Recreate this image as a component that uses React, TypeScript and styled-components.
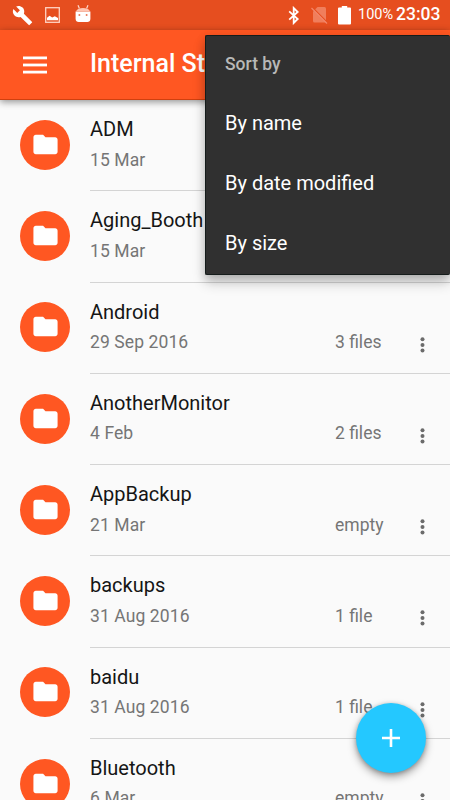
import React from "react";
import styled, { createGlobalStyle } from "styled-components";

const GlobalStyle = createGlobalStyle`
  html, body { margin: 0; padding: 0; }
  body { font-family: Roboto, "Noto Sans", sans-serif; background: #fafafa; overflow: hidden; }
  * { box-sizing: border-box; }
`;

const Screen = styled.div`
  position: relative;
  width: 450px;
  height: 800px;
  overflow: hidden;
  background: #fafafa;
  display: flex;
  flex-direction: column;
`;

const StatusBar = styled.div`
  flex: none;
  height: 30px;
  background: #e64e1f;
  display: flex;
  align-items: center;
  justify-content: space-between;
  padding: 0 9px 0 12px;
  color: #fff;
`;

const StatusGroup = styled.div`
  display: flex;
  align-items: center;
  height: 30px;
`;

const StatusIcon = styled.svg<{ $gap?: number }>`
  display: block;
  flex: none;
  margin-right: ${(p) => p.$gap ?? 0}px;
`;

const Battery = styled.span`
  font-size: 14.5px;
  line-height: 28px;
  height: 29px;
  width: 38px;
  white-space: nowrap;
`;

const Clock = styled.span`
  font-size: 17.5px;
  font-weight: 500;
  line-height: 27px;
  height: 29px;
  width: 45px;
  white-space: nowrap;
`;

const AppBar = styled.header`
  flex: none;
  height: 70px;
  background: #ff5722;
  border-bottom: 1px solid #d0400f;
  box-shadow: 0 2px 7px rgba(0, 0, 0, 0.42);
  display: flex;
  align-items: center;
  padding: 0 0 0 23px;
  z-index: 1;
`;

const MenuButton = styled.svg`
  display: block;
  margin-right: 43px;
`;

const Title = styled.h1`
  margin: 0 0 2px;
  color: #fff;
  font-size: 25px;
  font-weight: 500;
  line-height: 30px;
  white-space: nowrap;
`;

const List = styled.main`
  flex: none;
  display: flex;
  flex-direction: column;
`;

const Row = styled.div`
  height: 91.25px;
  display: flex;
  padding-left: 20px;
`;

const Avatar = styled.div`
  width: 50px;
  height: 50px;
  margin: 19.8px 20px 0 0;
  border-radius: 50%;
  background: #ff5722;
  display: flex;
  align-items: center;
  justify-content: center;
`;

const FolderIcon = styled.svg`
  display: block;
  margin-bottom: 1px;
`;

const RowBody = styled.div`
  flex: 1;
  display: flex;
  border-bottom: 1px solid #d4d4d4;
`;

const Texts = styled.div`
  width: 245px;
  padding-top: 17px;
`;

const Name = styled.div`
  font-size: 20px;
  line-height: 25px;
  color: #151515;
`;

const Meta = styled.div`
  font-size: 17.5px;
  line-height: 22px;
  color: #757575;
  white-space: nowrap;
`;

const DateText = styled(Meta)`
  margin-top: 6.7px;
  letter-spacing: 0.1px;
`;

const Count = styled(Meta)`
  width: 84px;
  padding-top: 48.7px;
`;

const More = styled.svg`
  display: block;
  margin-top: 53px;
`;

const Menu = styled.div`
  position: absolute;
  top: 35px;
  left: 205px;
  width: 245px;
  height: 240px;
  padding-left: 19px;
  border-radius: 2px;
  background: #303030;
  border: 1px solid #151c1b;
  border-right: 0;
  box-shadow: 0 8px 13px rgba(0, 0, 0, 0.2), 0 3px 10px rgba(0, 0, 0, 0.16);
  z-index: 3;
  display: flex;
  flex-direction: column;
`;

const MenuHeading = styled.div`
  height: 57px;
  line-height: 57px;
  font-size: 17.5px;
  font-weight: 500;
  color: #b8b8b8;
`;

const MenuItem = styled.div`
  height: 60px;
  line-height: 60px;
  font-size: 20px;
  color: #fff;
`;

const Fab = styled.button`
  position: absolute;
  left: 356px;
  top: 703px;
  width: 70px;
  height: 70px;
  padding: 0;
  border: 0;
  border-radius: 50%;
  background: #24c8ff;
  box-shadow: 0 4px 8px rgba(0, 0, 0, 0.36), 0 1px 4px rgba(0, 0, 0, 0.22);
  z-index: 2;
  display: flex;
  align-items: center;
  justify-content: center;
`;

type Folder = { name: string; date: string; count: string };

const folders: Folder[] = [
  { name: "ADM", date: "15 Mar", count: "" },
  { name: "Aging_Booth", date: "15 Mar", count: "" },
  { name: "Android", date: "29 Sep 2016", count: "3 files" },
  { name: "AnotherMonitor", date: "4 Feb", count: "2 files" },
  { name: "AppBackup", date: "21 Mar", count: "empty" },
  { name: "backups", date: "31 Aug 2016", count: "1 file" },
  { name: "baidu", date: "31 Aug 2016", count: "1 file" },
  { name: "Bluetooth", date: "6 Mar", count: "empty" },
];

const sortOptions = ["By name", "By date modified", "By size"];

const FolderRow = ({ name, date, count }: Folder) => (
  <Row>
    <Avatar>
      <FolderIcon width="29" height="29" viewBox="0 0 24 24" fill="#fff">
        <path d="M10 4H4c-1.1 0-1.99.9-1.99 2L2 18c0 1.1.9 2 2 2h16c1.1 0 2-.9 2-2V8c0-1.1-.9-2-2-2h-8l-2-2z" />
      </FolderIcon>
    </Avatar>
    <RowBody>
      <Texts>
        <Name>{name}</Name>
        <DateText>{date}</DateText>
      </Texts>
      <Count>{count}</Count>
      <More width="8" height="18" viewBox="0 0 8 18" fill="#6b6b6b">
        <circle cx="3.5" cy="3.2" r="2" />
        <circle cx="3.5" cy="8.9" r="2" />
        <circle cx="3.5" cy="14.6" r="2" />
      </More>
    </RowBody>
  </Row>
);

export default function App() {
  return (
    <>
      <GlobalStyle />
      <Screen>
        <StatusBar>
          <StatusGroup>
            <StatusIcon $gap={12} width="21" height="21" viewBox="0 0 24 24" fill="#fff">
              <path d="M22.7 19l-9.1-9.1c.9-2.3.4-5-1.5-6.9-2-2-5-2.4-7.4-1.3L9 6 6 9 1.6 4.7C.4 7.1.9 10.1 2.9 12.1c1.9 1.9 4.6 2.4 6.9 1.5l9.1 9.1c.4.4 1 .4 1.4 0l2.3-2.3c.5-.4.5-1.1.1-1.4z" />
            </StatusIcon>
            <StatusIcon $gap={15} width="15" height="16" viewBox="0 0 15 16">
              <rect x="0.7" y="0.7" width="13.6" height="14.6" fill="none" stroke="#ffd3c4" strokeWidth="1.3" />
              <path d="M2 13.2V10.8L4.6 8.8l2.6 1.8 2.6-1.3L13 11v2.2z" fill="#fff" />
            </StatusIcon>
            <StatusIcon width="16" height="20" viewBox="0 0 16 20">
              <path d="M3 0.2L4.4 3.6M13 0.2L11.6 3.6" stroke="#ffd8cb" strokeWidth="1.2" />
              <path d="M1 6.3C2 3.6 5 2.900 8 2.900s6 .7 7 3.400z" fill="#ffc5b2" />
              <path d="M0.600 6.600h14.800v7.400c0 1.800-1.400 3-3 3H3.600c-1.600 0-3-1.200-3-3z" fill="#fff" />
              <circle cx="4.400" cy="9.900" r="1" fill="#e8795a" />
              <circle cx="11.600" cy="9.900" r="1" fill="#e8795a" />
            </StatusIcon>
          </StatusGroup>
          <StatusGroup>
            <StatusIcon $gap={10} width="13" height="19" viewBox="0 0 13 19">
              <path d="M1.200 5.300l8.500 7.700-4 4V2l4 4-8.500 7.700" fill="none" stroke="#fff" strokeWidth="1.800" />
            </StatusIcon>
            <StatusIcon $gap={10} width="17" height="18" viewBox="0 0 17 18">
              <path d="M6.500 1H13.500Q15 1 15 2.500V16.500H3.500Q2 16.500 2 15V5.500z" fill="#f07e5c" />
              <path d="M1.200 1.300L16.700 16.800" stroke="#e64e1f" strokeWidth="1.300" />
              <path d="M0.500 2L16 17.500" stroke="#f2866a" strokeWidth="1.200" />
            </StatusIcon>
            <StatusIcon $gap={7} width="13" height="19" viewBox="0 0 13 19" fill="#fff">
              <path d="M3.800 0h5.400v1.500H12q1 0 1 1v15q0 1-1 1H1q-1 0-1-1V2.500q0-1 1-1h2.800z" />
            </StatusIcon>
            <Battery>100%</Battery>
            <Clock>23:03</Clock>
          </StatusGroup>
        </StatusBar>
        <AppBar>
          <MenuButton width="24" height="18" viewBox="0 0 24 18" fill="#fff">
            <rect y="0.500" width="24" height="2.800" />
            <rect y="7.600" width="24" height="2.800" />
            <rect y="14.700" width="24" height="2.800" />
          </MenuButton>
          <Title>Internal Storage</Title>
        </AppBar>
        <List>
          {folders.map((f) => (
            <FolderRow key={f.name} {...f} />
          ))}
        </List>
        <Fab aria-label="Add">
          <svg width="18" height="18" viewBox="0 0 18 18">
            <path d="M9 0v18M0 9h18" stroke="#fff" strokeWidth="2.600" />
          </svg>
        </Fab>
        <Menu>
          <MenuHeading>Sort by</MenuHeading>
          {sortOptions.map((o) => (
            <MenuItem key={o}>{o}</MenuItem>
          ))}
        </Menu>
      </Screen>
    </>
  );
}
